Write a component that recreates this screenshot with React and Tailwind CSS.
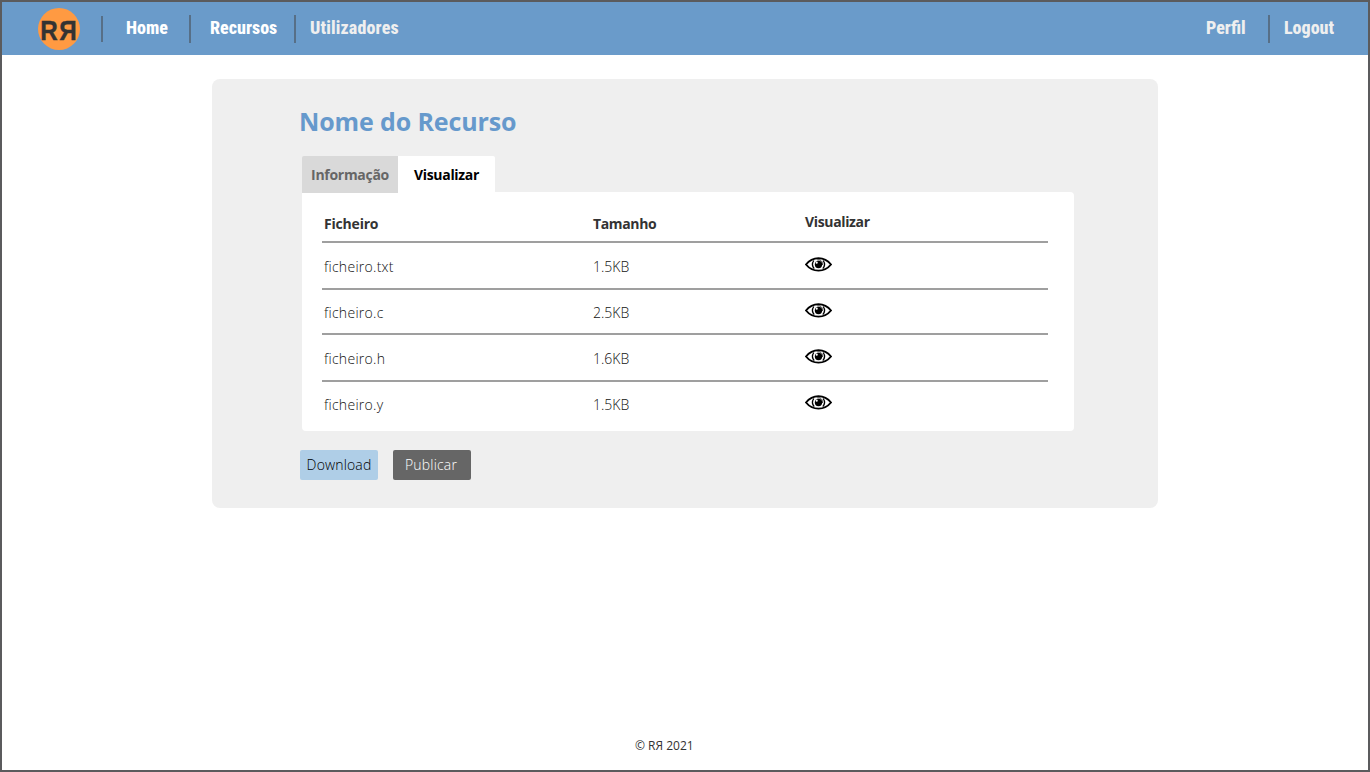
import React from "react";

const files = [
  { name: "ficheiro.txt", size: "1.5KB", row: "h-[47px] border-b-2", text: "pt-[14px]", eye: "pt-[13px]" },
  { name: "ficheiro.c", size: "2.5KB", row: "h-[45px] border-b-2", text: "pt-[13px]", eye: "pt-3" },
  { name: "ficheiro.h", size: "1.6KB", row: "h-[47px] border-b-2", text: "pt-[14px]", eye: "pt-[13px]" },
  { name: "ficheiro.y", size: "1.5KB", row: "h-[47px]", text: "pt-[13px]", eye: "pt-3" },
];

function Logo() {
  return (
    <svg className="block h-[42px] w-[42px]" viewBox="0 0 42 42">
      <circle cx="21" cy="21" r="21" fill="#ff9a42" />
      <g fill="#333333" stroke="#333333" strokeWidth="0.4" fontFamily="'Liberation Sans', Arial, sans-serif" fontWeight="700" fontSize="28">
        <text x="2.200" y="31.900" textLength="17.500" lengthAdjust="spacingAndGlyphs">R</text>
        <text x="21.200" y="31.900" textLength="17.500" lengthAdjust="spacingAndGlyphs">Я</text>
      </g>
    </svg>
  );
}

function Eye() {
  return (
    <svg className="block h-4 w-[27px]" viewBox="0 0 27 16" fill="none" stroke="#000">
      <path d="M1 8.500C4.500 4 8.700 2.200 13.500 2.200S22.500 4 26 8.500C22.500 12.800 18.300 14.600 13.500 14.600S4.500 12.800 1 8.500Z" strokeWidth="1.900" />
      <path d="M8.800 4.500C7.100 7 7.100 10.200 9.200 12.600M18.200 4.500C19.900 7 19.900 10.200 17.800 12.600" strokeWidth="1.300" />
      <circle cx="13.500" cy="8.500" r="3.700" fill="#000" stroke="none" />
      <path d="M12.300 3.900C15.500 3.300 18 5.500 17.500 9" strokeWidth="0.700" />
      <circle cx="11.700" cy="6.700" r="1.100" fill="#fff" stroke="none" />
    </svg>
  );
}

export default function App() {
  return (
    <div className="flex h-[772px] w-[1370px] flex-col border-2 border-[#5b5b5d] bg-white font-['Open_Sans',sans-serif] text-[#333]">
      <header className="flex h-[53px] shrink-0 bg-[#6a9bca] font-['Roboto_Condensed','Liberation_Sans_Narrow',sans-serif] text-[18px] leading-[24px] font-extrabold text-white">
        <div className="ml-9 pt-[6px]"><Logo /></div>
        <div className="mt-[14px] ml-[21px] h-[26px] w-[2px] bg-[#576f87]" />
        <a className="mt-[14px] ml-[23px] w-[63px]">Home</a>
        <div className="mt-[13px] h-7 w-[2px] bg-[#576f87]" />
        <a className="mt-[14px] ml-[19px] w-[84px]">Recursos</a>
        <div className="mt-[13px] h-7 w-[2px] bg-[#576f87]" />
        <a className="mt-[14px] ml-[14px] tracking-[0.15px] text-[#efefef]">Utilizadores</a>
        <div className="ml-auto flex text-[#efefef]">
          <a className="mt-[14px] w-[62px]">Perfil</a>
          <div className="mt-[13px] h-7 w-[2px] bg-[#576f87]" />
          <a className="mt-[14px] ml-[14px] w-[84px]">Logout</a>
        </div>
      </header>

      <main className="mt-6 ml-[210px] h-[429px] w-[946px] shrink-0 rounded-lg bg-[#efefef] pt-[25px] pl-[87px]">
        <h1 className="h-[52px] text-[25px] leading-[34px] font-bold tracking-[-0.12px] whitespace-nowrap text-[#6699cc]">Nome do Recurso</h1>
        <div className="ml-[3px] flex h-9 text-[14px] leading-[38px] font-bold tracking-[-0.3px]">
          <div className="h-[37px] w-24 rounded-tl-[2px] bg-[#d9d9d9] text-center text-[#666]">Informação</div>
          <div className="h-9 w-[97px] rounded-tr-[2px] bg-white text-center text-black">Visualizar</div>
        </div>
        <section className="ml-[3px] h-[239px] w-[772px] rounded-[4px] rounded-tl-none bg-white pr-[26px] pl-5">
          <div className="grid h-[51px] grid-cols-[269px_212px_1fr] border-b-2 border-[#9f9f9f] pt-[22px] pl-[2px] text-[14px] leading-5 font-bold tracking-[-0.35px]">
            <span className="tracking-[-0.2px]">Ficheiro</span>
            <span>Tamanho</span>
            <span className="-mt-[2px]">Visualizar</span>
          </div>
          {files.map((f) => (
            <div key={f.name} className={"grid grid-cols-[269px_212px_1fr] border-[#9f9f9f] pl-[2px] text-[14px] leading-5 font-light text-[#111] " + f.row}>
              <span className={"tracking-[0.28px] " + f.text}>{f.name}</span>
              <span className={f.text}>{f.size}</span>
              <span className={f.eye}><Eye /></span>
            </div>
          ))}
        </section>
        <div className="mt-[19px] ml-px flex gap-[15px] text-center text-[14px] leading-[30px]">
          <button className="h-[30px] w-[78px] rounded-[2px] bg-[#afcee7] font-light tracking-[0.15px] text-black">Download</button>
          <button className="h-[30px] w-[78px] rounded-[2px] bg-[#666] pr-[2px] font-light tracking-[0.2px] text-white">Publicar</button>
        </div>
      </main>
      <footer className="mt-auto mb-4 ml-[633px] text-[12px] leading-4">© RЯ 2021</footer>
    </div>
  );
}
